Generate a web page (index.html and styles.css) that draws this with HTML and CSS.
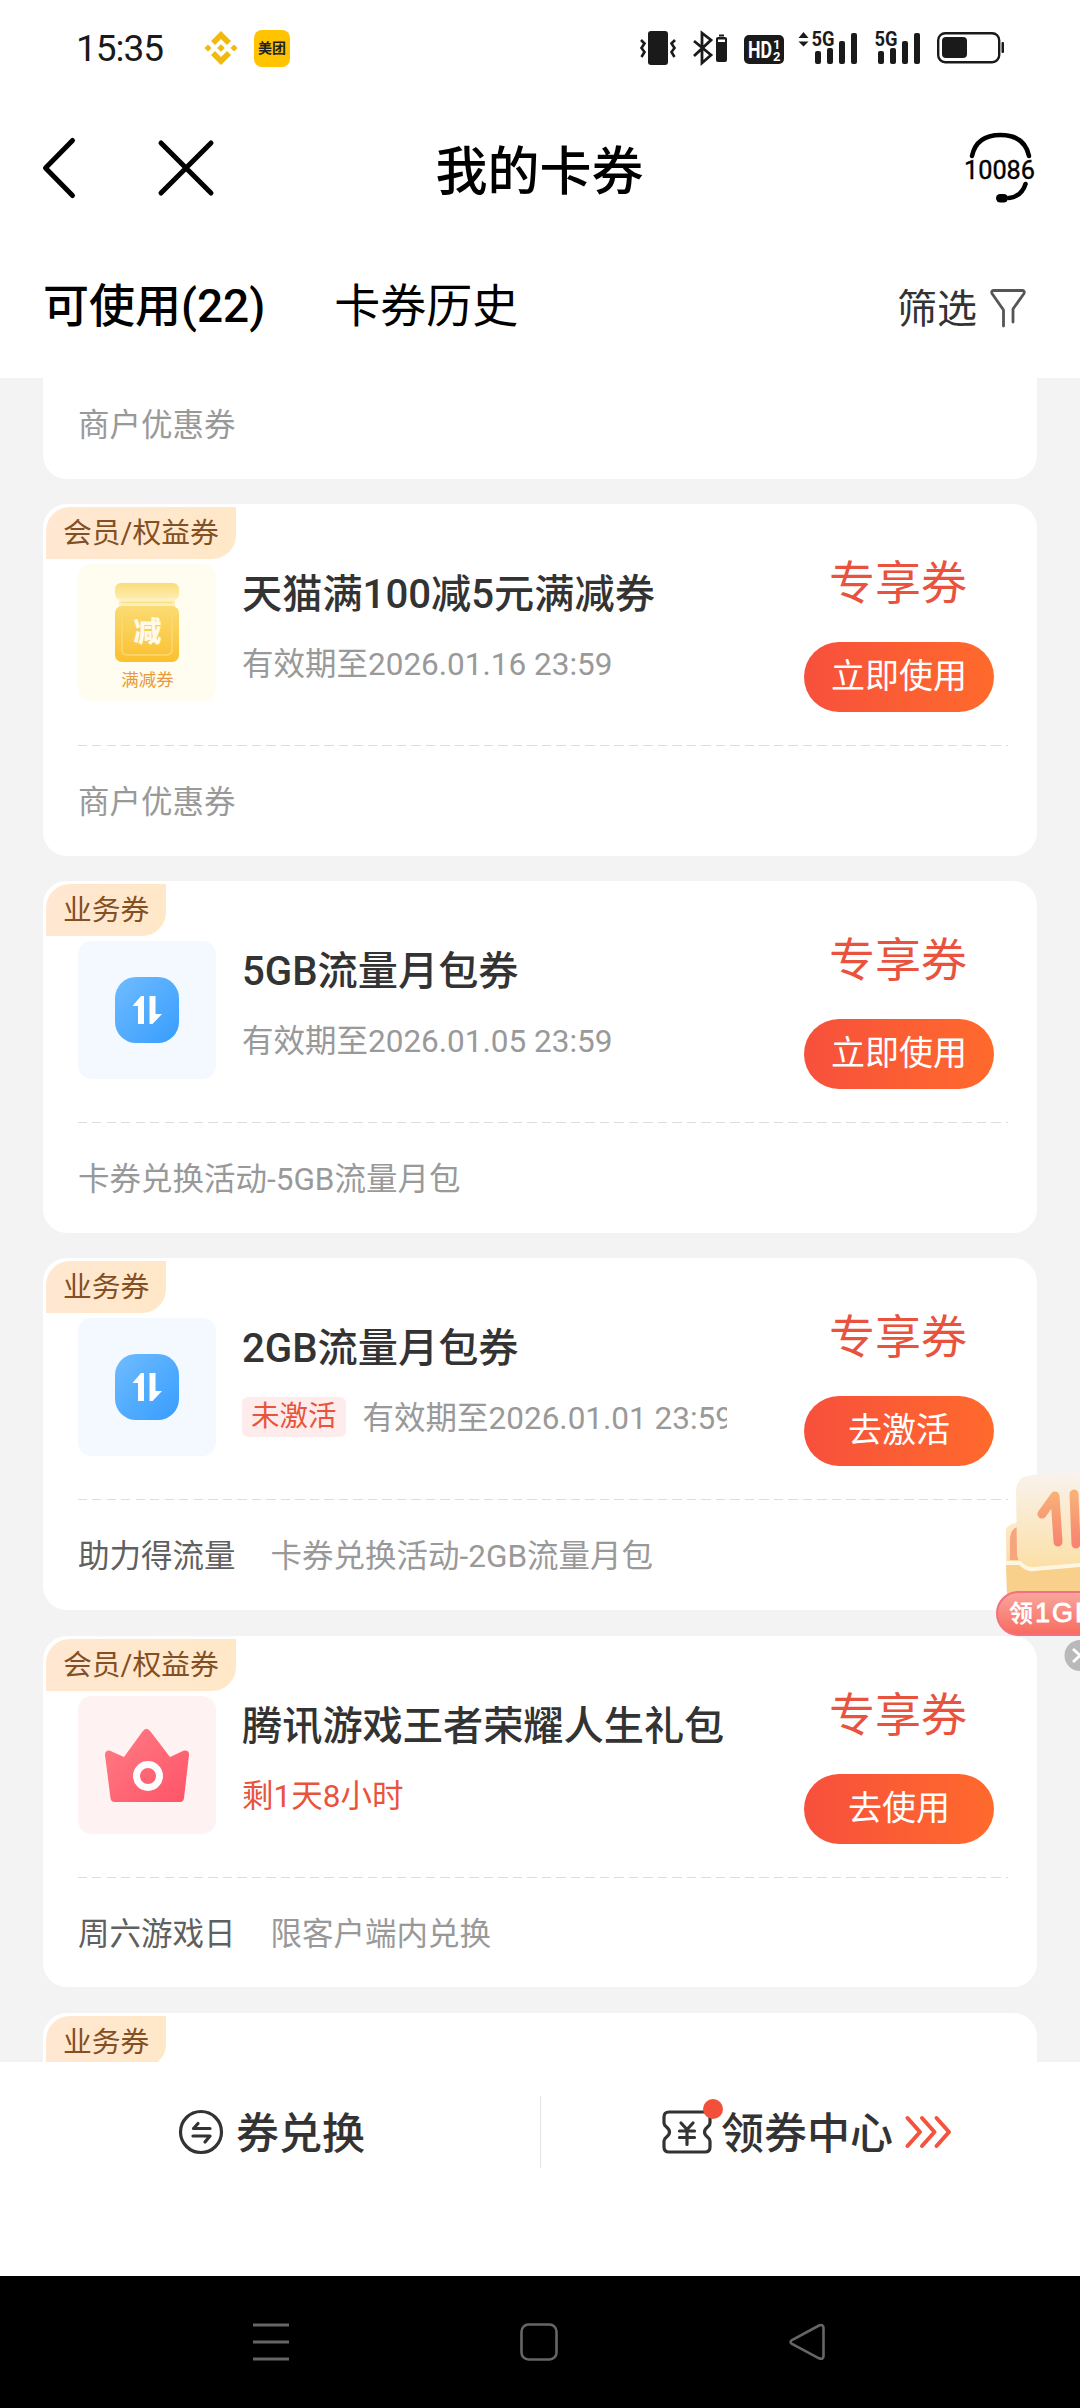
FILE: index.html
```html
<!DOCTYPE html>
<html lang="zh-CN">
<head>
<meta charset="utf-8">
<title>我的卡券</title>
<link rel="stylesheet" href="styles.css">
</head>
<body>
<svg class="defs" width="0" height="0" aria-hidden="true">
  <defs>
    <linearGradient id="blue" x1="0" y1="0" x2="1" y2="1"><stop offset="0" stop-color="#6fbcff"/><stop offset="1" stop-color="#379dfd"/></linearGradient>
    <linearGradient id="pink" x1="0" y1="0" x2="1" y2="1"><stop offset="0" stop-color="#ff7c85"/><stop offset="1" stop-color="#fe5468"/></linearGradient>
    <linearGradient id="jar" x1="0" y1="0" x2="0" y2="1"><stop offset="0" stop-color="#fbdb72"/><stop offset="1" stop-color="#fac02f"/></linearGradient>
    <linearGradient id="lid" x1="0" y1="0" x2="0" y2="1"><stop offset="0" stop-color="#fbdc78"/><stop offset="1" stop-color="#fdeeb4"/></linearGradient>
    <linearGradient id="folder" x1="0" y1="0" x2="0" y2="1"><stop offset="0" stop-color="#fdebc8"/><stop offset="1" stop-color="#f9cf8c"/></linearGradient>
    <linearGradient id="sheet" x1="0" y1="0" x2="0" y2="1"><stop offset="0" stop-color="#f9f3ee"/><stop offset="1" stop-color="#fbdfa6"/></linearGradient>
    <linearGradient id="stroke" x1="0" y1="0" x2="0" y2="1"><stop offset="0" stop-color="#f9b078"/><stop offset="1" stop-color="#f88470"/></linearGradient>
    <linearGradient id="pill" x1="0" y1="0" x2="0" y2="1"><stop offset="0" stop-color="#f9a79f"/><stop offset="1" stop-color="#f86a5c"/></linearGradient>
    <symbol id="data" viewBox="0 0 138 138">
      <rect x="37" y="36" width="64" height="66" rx="21" fill="url(#blue)"/>
      <path fill="#fff" d="M66 55V83H60V65H54.5L63 55ZM71.5 55H77.5V73H84L74.5 83H71.5Z"/>
    </symbol>
  </defs>
</svg>

<div class="status">
  <span class="clock">15:35</span>
  <svg class="binance" width="34" height="34" viewBox="0 0 34 34" fill="#f0b90b"><path d="M17 0 27 10 23 14 17 8 11 14 7 10ZM4 13.500 7.500 17 4 20.500 .5 17ZM30 13.500 33.500 17 30 20.500 26.500 17ZM17 13.200 20.800 17 17 20.800 13.200 17ZM11 20 17 26 23 20 27 24 17 34 7 24Z"/></svg>
  <span class="meituan">美团</span>
  <div class="status-right">
    <svg width="36" height="34" viewBox="0 0 36 34"><rect x="8" y="0" width="20" height="34" rx="3" fill="#1a1a1a"/><path d="M1 9 4.500 12.500 1.500 17 4.500 21 1.500 26M35 9 31.500 12.500 34.500 17 31.500 21 34.500 26" fill="none" stroke="#1a1a1a" stroke-width="2.600"/></svg>
    <svg class="bt" width="34" height="34" viewBox="0 0 34 34"><path d="M1 10 18 24 9 32V2L18 9 1 25" fill="none" stroke="#1a1a1a" stroke-width="2.800"/><rect x="23" y="6" width="11" height="25" rx="2" fill="#1a1a1a"/><path d="M26 4.500H31" stroke="#1a1a1a" stroke-width="2"/><rect x="25" y="8.500" width="7" height="2.500" fill="#fff"/></svg>
    <svg class="hd" width="40" height="29" viewBox="0 0 40 29"><rect width="40" height="29" rx="5" fill="#1a1a1a"/><g fill="#fff" font-family="Roboto" font-weight="700"><text x="4" y="22.500" font-size="23" textLength="24" lengthAdjust="spacingAndGlyphs">HD</text><text x="29" y="13.500" font-size="13">1</text><text x="29" y="25.500" font-size="13">2</text></g></svg>
    <svg class="sig" width="60" height="34" viewBox="0 0 60 34" fill="#1a1a1a"><path d="M5.500 1 10.500 7H.5ZM.5 10.500H10.500L5.500 15.500Z"/><text x="13.500" y="15" font-family="Roboto" font-weight="700" font-size="20" textLength="23" lengthAdjust="spacingAndGlyphs">5G</text><rect x="17" y="20" width="6" height="13" rx="2"/><rect x="29" y="17" width="6" height="16" rx="2"/><rect x="41" y="10" width="6" height="23" rx="2"/><rect x="53" y="2" width="6" height="31" rx="2"/></svg>
    <svg class="sig2" width="47" height="34" viewBox="13 0 47 34" fill="#1a1a1a"><text x="13.500" y="15" font-family="Roboto" font-weight="700" font-size="20" textLength="23" lengthAdjust="spacingAndGlyphs">5G</text><rect x="17" y="20" width="6" height="13" rx="2"/><rect x="29" y="17" width="6" height="16" rx="2"/><rect x="41" y="10" width="6" height="23" rx="2"/><rect x="53" y="2" width="6" height="31" rx="2"/></svg>
    <svg width="67" height="32" viewBox="0 0 67 32"><rect x="1.200" y="1.200" width="61" height="29" rx="7" fill="none" stroke="#1a1a1a" stroke-width="2.400"/><rect x="5" y="5" width="25" height="21" rx="4" fill="#1a1a1a"/><rect x="64.500" y="10" width="2.500" height="11" rx="1" fill="#1a1a1a"/></svg>
  </div>
</div>

<div class="navbar">
  <div class="nav-left">
    <svg width="34" height="62" viewBox="0 0 34 62"><path d="M30.500 3.500 3.500 31 30.500 58.500" fill="none" stroke="#000" stroke-width="5" stroke-linecap="round" stroke-linejoin="round"/></svg>
    <svg width="56" height="56" viewBox="0 0 56 56"><path d="M3 3 53 53M53 3 3 53" stroke="#000" stroke-width="5" stroke-linecap="round"/></svg>
  </div>
  <h1 class="title">我的卡券</h1>
  <svg class="service" width="74" height="74" viewBox="0 0 74 74"><path d="M9 26C12 12 22 5 37.500 5S63 12 66 26M62.500 54C60 62 55 67 46 68" fill="none" stroke="#000" stroke-width="4.500" stroke-linecap="round"/><rect x="33" y="64" width="12" height="8.500" rx="4.200"/><text x="36.500" y="49" text-anchor="middle" font-family="Roboto" font-weight="400" stroke="#000" stroke-width=".4" font-size="26" textLength="71" lengthAdjust="spacingAndGlyphs">10086</text></svg>
</div>

<div class="tabs">
  <span class="tab active">可使用(22)</span>
  <span class="tab">卡券历史</span>
  <span class="filter">筛选<svg width="36" height="40" viewBox="0 0 36 40"><path d="M13.500 38V22L2 5.500Q1 2.500 4 2.500H32Q35 2.500 34 5.500L23 21V34" fill="none" stroke="#555" stroke-width="2.800" stroke-linecap="round" stroke-linejoin="round"/></svg></span>
</div>

<main class="list">
  <article class="card partial">
    <div class="foot"><span>商户优惠券</span></div>
  </article>

  <article class="card">
    <span class="badge">会员/权益券</span>
    <div class="main">
      <svg class="thumb yellow" viewBox="0 0 138 138"><rect x="37" y="19" width="64" height="17" rx="6" fill="url(#lid)"/><rect x="41" y="34" width="56" height="9" fill="#fdf0bd"/><path d="M43 38.500H95" stroke="#fadf8b" stroke-width="1.500"/><rect x="37" y="42" width="64" height="56" rx="7" fill="url(#jar)"/><rect x="44" y="48" width="50" height="43" rx="5" fill="none" stroke="#fbd973" stroke-width="1.500"/><text x="69.500" y="78" class="jar-text">减</text><text x="69.500" y="122" class="jar-label">满减券</text></svg>
      <div class="info"><h2>天猫满100减5元满减券</h2><p class="sub">有效期至2026.01.16 23:59</p></div>
      <div class="action"><b>专享券</b><span class="btn">立即使用</span></div>
    </div>
    <div class="foot"><span>商户优惠券</span></div>
  </article>

  <article class="card">
    <span class="badge">业务券</span>
    <div class="main">
      <svg class="thumb blue"><use href="#data"/></svg>
      <div class="info"><h2>5GB流量月包券</h2><p class="sub">有效期至2026.01.05 23:59</p></div>
      <div class="action"><b>专享券</b><span class="btn">立即使用</span></div>
    </div>
    <div class="foot"><span>卡券兑换活动-5GB流量月包</span></div>
  </article>

  <article class="card">
    <span class="badge">业务券</span>
    <div class="main">
      <svg class="thumb blue"><use href="#data"/></svg>
      <div class="info"><h2>2GB流量月包券</h2><p class="sub"><span class="tag">未激活</span>有效期至2026.01.01 23:59</p></div>
      <div class="action"><b>专享券</b><span class="btn">去激活</span></div>
    </div>
    <div class="foot"><span class="source">助力得流量</span><span>卡券兑换活动-2GB流量月包</span></div>
  </article>

  <article class="card">
    <span class="badge">会员/权益券</span>
    <div class="main">
      <svg class="thumb red" viewBox="0 0 138 138"><path d="M64.500 35.500Q68.500 30 72.500 35.500L92 61 106 54.500Q111.500 54 111 59L106 102Q105.500 106 102 106H36.500Q33 106 32.500 102L27 59Q27 54 31.500 54.500L46 61Z" fill="url(#pink)"/><circle cx="70" cy="80" r="11.500" fill="none" stroke="#fff" stroke-width="7"/></svg>
      <div class="info"><h2>腾讯游戏王者荣耀人生礼包</h2><p class="sub urgent">剩1天8小时</p></div>
      <div class="action"><b>专享券</b><span class="btn">去使用</span></div>
    </div>
    <div class="foot"><span class="source">周六游戏日</span><span>限客户端内兑换</span></div>
  </article>

  <article class="card">
    <span class="badge">业务券</span>
  </article>
</main>

<div class="bottom">
  <div class="entry exchange">
    <svg width="46" height="46" viewBox="0 0 46 46" fill="none" stroke="#333" stroke-width="3.200" stroke-linecap="round" stroke-linejoin="round"><circle cx="23" cy="23" r="20.500"/><path d="M32 19.500H15.500L20 14.500M15 27H32L27 33"/></svg>
    <span class="label">券兑换</span>
  </div>
  <i class="divider"></i>
  <div class="entry center">
    <span class="ticket">
      <svg width="50" height="44" viewBox="0 0 50 44" fill="none" stroke="#333" stroke-width="3.200" stroke-linecap="round" stroke-linejoin="round"><path d="M7 2H43Q48 2 48 7V13C48 17 42.500 17 42.500 22S48 27 48 31V37Q48 42 43 42H7Q2 42 2 37V31C2 27 7.500 27 7.500 22S2 17 2 13V7Q2 2 7 2Z"/><path d="M19 13 25 19.500 31 13M17.500 21H32.500M17.500 27.500H32.500M25 20V34.500"/></svg>
      <i class="dot"></i>
    </span>
    <span class="label">领券中心</span>
    <svg class="chevrons" width="46" height="34" viewBox="0 0 46 34" fill="none" stroke="#f3533f" stroke-width="4" stroke-linecap="round" stroke-linejoin="round"><path d="M2.500 3 15 17 2.500 31M17 3 29.500 17 17 31M31.500 3 44 17 31.500 31"/></svg>
  </div>
</div>

<div class="sysnav">
  <svg width="36" height="38" viewBox="0 0 36 38" stroke="#666" stroke-width="3"><path d="M0 2H36M0 19H36M0 36H36"/></svg>
  <svg width="38" height="38" viewBox="0 0 38 38" fill="none" stroke="#666" stroke-width="2.600"><rect x="1.500" y="1.500" width="35" height="35" rx="7"/></svg>
  <svg width="36" height="38" viewBox="0 0 36 38" fill="none" stroke="#666" stroke-width="2.600"><path d="M30 2.500Q34.500 .8 34.500 5V33Q34.500 37 30 35.300L3 21Q0 19 3 17Z"/></svg>
</div>

<svg class="float" width="84" height="204" viewBox="0 0 84 204">
  <path d="M10 58Q11 52 24 50V90H84V122H11Z" fill="url(#folder)"/>
  <path d="M14 66Q15 56 24 54V88H14Z" fill="#f7a57f"/>
  <path d="M20 18Q21 4 36 3L84 0V96H36Q22 96 21 82Z" fill="url(#sheet)"/>
  <path d="M46 42 59 24 62 70M78 22 80 72" fill="none" stroke="url(#stroke)" stroke-width="9" stroke-linecap="round" stroke-linejoin="round"/>
  <path d="M10 91H24Q30 98 38 98L84 93V122H11Z" fill="#f9cf8c"/>
  <path d="M10 91H24Q30 98 38 97L84 93" fill="none" stroke="#fff6e2" stroke-width="4"/>
  <rect x="1" y="120" width="120" height="43" rx="21.500" fill="url(#pill)" stroke="#f27082" stroke-width="2"/>
  <text x="13" y="150" class="float-text">领<tspan class="float-latin" x="39">1GB</tspan></text>
  <circle cx="84" cy="183.500" r="15.500" fill="#b9b9b9"/>
  <path d="M77 177 84 183.500 77 190" fill="none" stroke="#fff" stroke-width="2.800"/>
</svg>
</body>
</html>
```

FILE: styles.css
```css
* { box-sizing: border-box; margin: 0; padding: 0; }
body {
  position: relative;
  width: 1080px;
  height: 2408px;
  overflow: hidden;
  background: #fff;
  color: #000;
  font-family: Roboto, "Noto Sans CJK SC", sans-serif;
}
svg { display: block; flex: none; overflow: visible; }
.defs { position: absolute; }

.status { display: flex; align-items: center; height: 96px; padding: 0 76px 0 76px; }
.clock { width: 128px; font-size: 37px; letter-spacing: -1px; color: #1a1a1a; }
.meituan {
  width: 36px; height: 37px; margin-left: 16px;
  border-radius: 8px; background: #ffc300; color: #222;
  font-size: 14px; font-weight: 700; line-height: 36px; text-align: center; white-space: nowrap;
}
.status-right { display: flex; align-items: center; margin-left: auto; }
.bt { margin-left: 17px; }
.hd { margin: 2px 0 0 17px; }
.sig { margin-left: 14px; }
.sig2 { margin: 0 16px; }

.navbar { display: grid; grid-template-columns: 1fr auto 1fr; align-items: center; height: 144px; padding: 0 43px 0 42px; }
.nav-left { display: flex; align-items: center; gap: 82px; }
.title { font-size: 52px; font-weight: 500; line-height: 64px; padding-top: 9px; }
.service { justify-self: end; margin-top: -2px; }

.tabs { display: flex; align-items: center; height: 138px; padding: 0 54px 14px 43px; font-size: 46px; }
.tab.active { font-weight: 500; margin-right: 69px; }
.filter { display: flex; align-items: center; gap: 13px; margin-left: auto; padding-top: 8px; font-size: 40px; color: #333; }
.filter svg { margin-top: 3px; }

.list { display: flex; flex-direction: column; gap: 25.400px; height: 1684px; padding: 0 43px; overflow: hidden; background: #f3f3f3; }
.card { position: relative; flex: none; height: 351.850px; border-radius: 24px; background: #fff; }
.partial { height: 100.500px; border-radius: 0 0 24px 24px; }
.badge {
  position: absolute; left: 3px; top: 3px;
  height: 52px; padding: 0 17px;
  border-radius: 24px 0 24px 0;
  background: linear-gradient(90deg, #ffe7d2, #ffe8c8);
  color: #834f24; font-size: 28.800px; line-height: 52px; white-space: nowrap;
}
.main { display: flex; height: 242px; margin: 0 30px 0 35px; padding-top: 60px; }
.main::after {
  content: ""; position: absolute; left: 35px; right: 29px; top: 241px; height: 1px;
  background: repeating-linear-gradient(90deg, #ddd 0 9px, transparent 9px 14.500px);
}
.thumb { width: 138px; height: 138px; border-radius: 14px; }
.yellow { background: #fffdf0; }
.blue { background: #f4f8ff; }
.red { background: #fff2f2; }
.jar-text { fill: #fffbe8; font-size: 28px; font-weight: 900; text-anchor: middle; }
.jar-label { fill: #e8993c; font-size: 17.500px; text-anchor: middle; }
.info { width: 485px; margin-left: 26px; overflow: hidden; white-space: nowrap; }
.info h2 { padding-top: 7px; font-size: 40.200px; font-weight: 500; line-height: 48px; color: #333; }
.sub { display: flex; align-items: center; margin-top: 21px; height: 42px; font-size: 31.500px; color: #999; }
.urgent { color: #e9533e; }
.tag { height: 40px; margin: 3px 17px 0 0; padding: 0 9px; border-radius: 6px; background: #fdeceb; color: #e9533e; font-size: 28.500px; line-height: 39px; }
.action { display: flex; flex-direction: column; align-items: center; width: 190px; margin-left: 77px; }
.action b { margin: -10px 0 0 -2px; font-size: 46px; font-weight: 400; line-height: 58px; color: #e9533e; }
.btn {
  width: 190px; height: 70px; margin-top: 30px; border-radius: 35px;
  background: linear-gradient(90deg, #f7503c, #ff6a2c);
  color: #fff; font-size: 34px; line-height: 68px; text-align: center;
}
.foot { display: flex; align-items: center; gap: 35px; height: 106px; padding-left: 35px; font-size: 31.500px; color: #999; }
.partial .foot { height: 87px; }
.source { color: #606060; }

.bottom { display: flex; height: 214px; padding-top: 34px; font-size: 43px; color: #333; background: #fff; }
.entry { display: flex; align-items: center; height: 72px; font-weight: 500; }
.label { padding-bottom: 5px; }
.exchange { width: 540px; padding-left: 178px; gap: 12px; }
.divider { width: 1px; height: 72px; background: #e4e4e4; }
.center { padding-left: 121px; gap: 9px; }
.ticket { position: relative; }
.dot { position: absolute; right: -11px; top: -11px; width: 20px; height: 20px; border-radius: 50%; background: #f3503b; }
.chevrons { margin-left: 3px; }

.sysnav { display: flex; align-items: center; gap: 231px; height: 132px; padding-left: 253px; background: #000; }
.float { position: absolute; right: 0; top: 1472px; }
.float-text { fill: #fff; font-size: 24px; font-weight: 700; }
.float-latin { font-family: "Liberation Sans"; font-size: 27px; font-weight: 400; letter-spacing: 2px; stroke: #fff; stroke-width: .8px; }
```
